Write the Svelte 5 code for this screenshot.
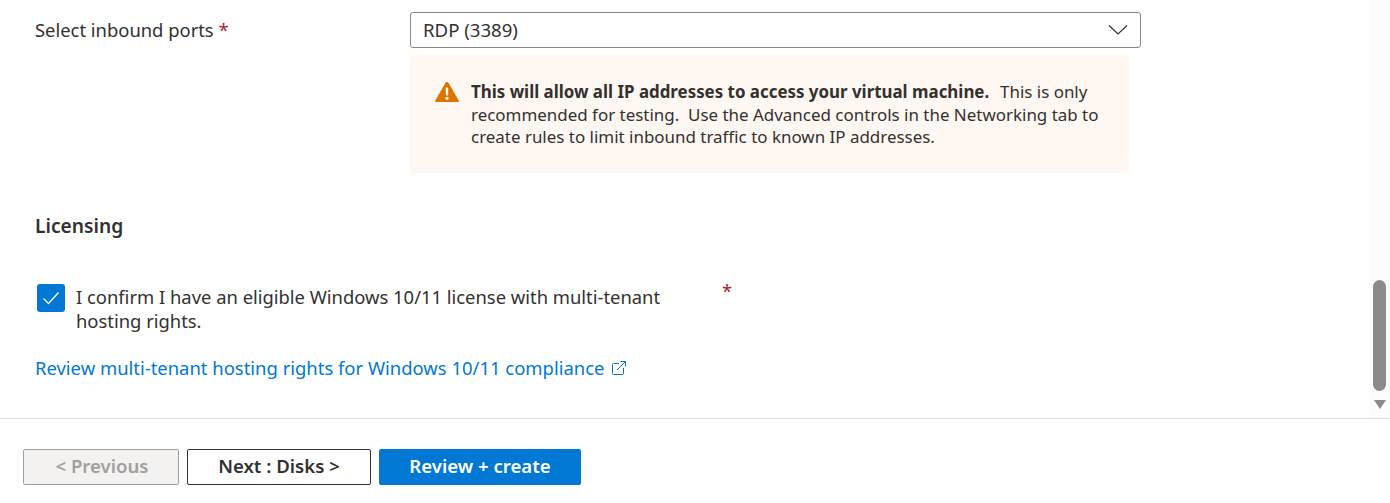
<script>
	let confirmed = $state(true);
	let port = 'RDP (3389)';
</script>

<div class="page">
	<main class="content">
		<div class="field-row">
			<span class="field-label">Select inbound ports <span class="req">*</span></span>
			<div class="field-body">
				<div class="select">
					<span>{port}</span>
					<svg width="20" height="12" viewBox="0 0 20 12" fill="none" stroke="#323130" stroke-width="1.2">
						<path d="M1 1.5 L10 10 L19 1.5" />
					</svg>
				</div>
				<div class="warning">
					<svg class="warn-icon" width="26" height="22" viewBox="0 0 26 22">
						<path d="M13 1 Q14 1 14.6 2 L24.7 19.4 Q25.4 21 23.6 21 L2.4 21 Q.6 21 1.3 19.4 L11.4 2 Q12 1 13 1 Z" fill="#db7500" />
						<rect x="11.8" y="6.5" width="2.4" height="8" rx="1" fill="#fff" />
						<circle cx="13" cy="17.3" r="1.5" fill="#fff" />
					</svg>
					<p>
						<strong>This will allow all IP addresses to access your virtual machine.</strong>&nbsp; This is only
						recommended for testing.&nbsp; Use the Advanced controls in the Networking tab to
						create rules to limit inbound traffic to known IP addresses.
					</p>
				</div>
			</div>
		</div>

		<h2>Licensing</h2>

		<div class="confirm-row">
			<button class="checkbox" class:checked={confirmed} onclick={() => (confirmed = !confirmed)} aria-label="Confirm license">
				{#if confirmed}
					<svg width="18" height="14" viewBox="0 0 18 14" fill="none" stroke="#fff" stroke-width="1.3">
						<path d="M1.5 7.5 L6.5 12.5 L16.5 1.5" />
					</svg>
				{/if}
			</button>
			<span class="confirm-text">I confirm I have an eligible Windows 10/11 license with multi-tenant hosting rights.</span>
			<span class="req confirm-req">*</span>
		</div>

		<a class="link" href="#top">
			Review multi-tenant hosting rights for Windows 10/11 compliance
			<svg width="16" height="16" viewBox="0 0 16 16" fill="none" stroke="#0078d4" stroke-width="1">
				<path d="M8 3.5 H2.5 a1 1 0 0 0 -1 1 V13.5 a1 1 0 0 0 1 1 H11.5 a1 1 0 0 0 1 -1 V8" />
				<path d="M6 10 L14.5 1.5 M9.5 1.5 H14.5 V6.5" />
			</svg>
		</a>
	</main>

	<footer class="actions">
		<button class="btn" disabled>&lt; Previous</button>
		<button class="btn next">Next : Disks &gt;</button>
		<button class="btn primary">Review + create</button>
	</footer>

	<div class="scrollbar">
		<div class="thumb"></div>
		<div class="arrow"></div>
	</div>
</div>

<style>
	:global(body) {
		margin: 0;
		background: #fff;
	}

	.page {
		position: relative;
		width: 1390px;
		height: 503px;
		overflow: hidden;
		display: flex;
		flex-direction: column;
		font-family: "Noto Sans", "Open Sans", sans-serif;
		font-size: 18.4px;
		color: #323130;
	}

	.content {
		height: 419px;
		box-sizing: border-box;
		padding: 12px 0 0 35px;
		border-bottom: 1px solid #e1dfdd;
	}

	.field-row {
		display: flex;
	}

	.field-label {
		width: 375px;
		line-height: 36px;
	}

	.req {
		color: #a4262c;
	}

	.field-body {
		width: 731px;
	}

	.select {
		height: 36px;
		box-sizing: border-box;
		border: 1px solid #8a8886;
		border-radius: 3px;
		padding: 0 12px 2px;
		display: flex;
		align-items: center;
		justify-content: space-between;
		font-size: 18.6px;
	}

	.select svg {
		margin-top: 2px;
	}

	.warning {
		width: 719px;
		height: 118px;
		box-sizing: border-box;
		margin-top: 7px;
		padding: 26px 24px 0;
		background: #fff8f2;
		border-radius: 3px;
		display: flex;
		gap: 11px;
		font-size: 16.95px;
	}

	.warn-icon {
		flex: none;
	}

	.warning p {
		margin: 0;
		line-height: 22.6px;
	}

	.warning strong {
		font-weight: 700;
		font-size: 16.9px;
		margin-right: 2px;
	}

	h2 {
		margin: 40px 0 0;
		font-size: 19.2px;
		font-weight: 600;
		line-height: 26px;
	}

	.confirm-row {
		display: flex;
		margin: 45px 0 0 2px;
		position: relative;
	}

	.checkbox {
		width: 28px;
		height: 28px;
		padding: 0;
		flex: none;
		border: none;
		border-radius: 3px;
		background: #fff;
		display: flex;
		align-items: center;
		justify-content: center;
		cursor: pointer;
	}

	.checkbox.checked {
		background: #0078d4;
	}

	.confirm-text {
		width: 600px;
		margin-left: 11px;
		padding-top: 1px;
		line-height: 24px;
	}

	.confirm-req {
		margin-left: 46px;
		line-height: 14px;
	}

	.link {
		display: flex;
		align-items: center;
		gap: 7px;
		margin-top: 23px;
		color: #0078d4;
		text-decoration: none;
		font-size: 18.45px;
		line-height: 24px;
	}

	.actions {
		display: flex;
		gap: 8px;
		padding: 30px 0 0 23px;
	}

	.btn {
		height: 36px;
		width: 184px;
		box-sizing: border-box;
		border: 1px solid #323130;
		border-radius: 2px;
		background: #fff;
		color: #323130;
		font: 600 18.6px "Noto Sans", "Open Sans", sans-serif;
		padding: 0 0 4px;
	}

	.btn:disabled {
		width: 156px;
		background: #f3f2f1;
		border-color: #a19f9d;
		color: #a19f9d;
		padding-left: 2px;
	}

	.primary {
		width: 202px;
		background: #0078d4;
		border-color: #0078d4;
		color: #fff;
	}

	/* overlay scrollbar on the right edge */
	.scrollbar {
		position: absolute;
		top: 0;
		right: 0;
		width: 21px;
		height: 418px;
		background: #fcfcfc;
	}

	.thumb {
		position: absolute;
		top: 280px;
		left: 4px;
		width: 13px;
		height: 111px;
		border-radius: 7px;
		background: #8b8b8b;
	}

	.arrow {
		position: absolute;
		top: 400px;
		left: 5px;
		border-left: 6px solid transparent;
		border-right: 6px solid transparent;
		border-top: 9px solid #8b8b8b;
	}
</style>
